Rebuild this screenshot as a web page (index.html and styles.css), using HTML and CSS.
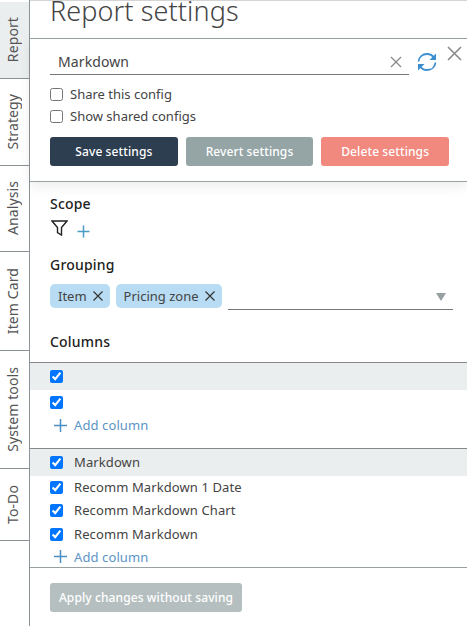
FILE: index.html
```html
<!DOCTYPE html>
<html>
<head>
    <title>Report settings</title>
    <link rel="stylesheet" href="styles.css">
</head>
<body>
    <div class="app">
        <nav class="tabs">
            <div class="tab tab-report active"><span>Report</span></div>
            <div class="tab tab-strategy"><span>Strategy</span></div>
            <div class="tab tab-analysis"><span>Analysis</span></div>
            <div class="tab tab-item"><span>Item Card</span></div>
            <div class="tab tab-system"><span>System tools</span></div>
            <div class="tab tab-todo"><span>To-Do</span></div>
        </nav>

        <main class="content">
            <h1 class="title">Report settings</h1>

            <section class="config">
                <svg class="close-icon" width="15" height="15" viewBox="0 0 15 15"><path d="M1 1L14 14M14 1L1 14"/></svg>
                <div class="config-row">
                    <div class="config-input">
                        <span>Markdown</span>
                        <svg class="clear-icon" width="12" height="12" viewBox="0 0 12 12"><path d="M1 1L11 11M11 1L1 11"/></svg>
                    </div>
                    <svg class="refresh-icon" width="22" height="20" viewBox="0 0 22 20">
                        <path d="M2.500 9.500C3 5 6.500 2 11 2c3 0 5.500 1.500 7 3.800"/>
                        <path d="M19.500 10.500C19 15 15.500 18 11 18c-3 0-5.500-1.500-7-3.800"/>
                        <path class="solid" d="M20 1.500V8h-6.500zM2 18.500V12h6.500z"/>
                    </svg>
                </div>
                <label class="check"><input type="checkbox">Share this config</label>
                <label class="check"><input type="checkbox">Show shared configs</label>
                <div class="config-buttons">
                    <button class="btn btn-save" type="button">Save settings</button>
                    <button class="btn btn-revert" type="button">Revert settings</button>
                    <button class="btn btn-delete" type="button">Delete settings</button>
                </div>
            </section>

            <section class="options">
                <h2>Scope</h2>
                <div class="scope-row">
                    <svg class="filter-icon" width="17" height="16" viewBox="0 0 17 16"><path d="M1 1H16L10.500 7.500V15L6.500 12.500V7.500Z"/></svg>
                    <svg class="plus-icon" width="13" height="13" viewBox="0 0 13 13"><path d="M6.500 0.500V12.500M0.500 6.500H12.500"/></svg>
                </div>

                <h2 class="grouping-title">Grouping</h2>
                <div class="grouping-row">
                    <span class="chip">Item <svg width="10" height="10" viewBox="0 0 10 10"><path d="M0.500 0.500L9.500 9.500M9.500 0.500L0.500 9.500"/></svg></span>
                    <span class="chip">Pricing zone <svg width="10" height="10" viewBox="0 0 10 10"><path d="M0.500 0.500L9.500 9.500M9.500 0.500L0.500 9.500"/></svg></span>
                    <div class="select"><i class="arrow"></i></div>
                </div>

                <h2 class="columns-title">Columns</h2>
            </section>

            <section class="column-group">
                <div class="group-head"><input type="checkbox" checked></div>
                <div class="column-row"><input type="checkbox" checked></div>
                <div class="add-column">
                    <svg width="15" height="15" viewBox="0 0 15 15"><path d="M7.500 1V14M1 7.500H14"/></svg>Add column
                </div>
            </section>

            <section class="column-group second">
                <div class="group-head"><input type="checkbox" checked>Markdown</div>
                <div class="column-row"><input type="checkbox" checked>Recomm Markdown 1 Date</div>
                <div class="column-row"><input type="checkbox" checked>Recomm Markdown Chart</div>
                <div class="column-row"><input type="checkbox" checked>Recomm Markdown</div>
                <div class="add-column">
                    <svg width="15" height="15" viewBox="0 0 15 15"><path d="M7.500 1V14M1 7.500H14"/></svg>Add column
                </div>
            </section>

            <footer class="footer">
                <button class="btn btn-apply" type="button">Apply changes without saving</button>
            </footer>
        </main>
    </div>
</body>
</html>
```

FILE: styles.css
```css
* {
    box-sizing: border-box;
}

html, body {
    margin: 0;
    height: 100%;
    overflow: hidden;
    background-color: #fff;
}

body {
    font-family: "Noto Sans", Arial, sans-serif;
    font-size: 13px;
    letter-spacing: 0.1px;
    color: #444;
}

.app {
    display: flex;
    height: 626px;
}

/* left tabs */
.tabs {
    width: 30px;
    flex: none;
    padding-top: 2px;
    border-right: 1px solid #8c9396;
}

.tab {
    display: flex;
    justify-content: center;
    align-items: center;
    padding-right: 3px;
    border-bottom: 1px solid #8c9396;
    font-size: 14px;
    color: #555;
}

.tab span {
    writing-mode: vertical-rl;
    transform: rotate(180deg);
    line-height: 20px;
}

.tab.active {
    background-color: #ebeeef;
}

.tab-report { height: 77px; }
.tab-strategy { height: 87px; }
.tab-analysis { height: 86px; }
.tab-item { height: 99px; }
.tab-system { height: 118px; }
.tab-todo { height: 72px; }

.content {
    flex: 1;
    min-width: 0;
}

.title {
    height: 39px;
    margin: 0;
    padding-left: 20px;
    border-top: 1px solid #d4d4d4;
    border-bottom: 1px solid #9aa1a3;
    font-size: 27px;
    font-weight: 300;
    line-height: 20px;
    color: #444;
    overflow: hidden;
}

/* config panel */
.config {
    position: relative;
    height: 143px;
    padding: 10px 18px 0 20px;
    border-bottom: 1px solid #9aa1a3;
    box-shadow: 0 4px 12px rgba(0, 0, 0, 0.08);
}

.close-icon {
    position: absolute;
    top: 7px;
    right: 5px;
    fill: none;
    stroke: #8a8a8a;
    stroke-width: 1.6;
}

.config-row {
    display: flex;
    align-items: center;
    gap: 7px;
    width: 392px;
}

.config-input {
    display: flex;
    align-items: center;
    justify-content: space-between;
    width: 359px;
    height: 26px;
    padding: 0 7px 0 8px;
    border-bottom: 1px solid #777;
    font-size: 14px;
}

.clear-icon {
    fill: none;
    stroke: #8a8a8a;
    stroke-width: 1.3;
}

.refresh-icon {
    fill: none;
    stroke: #3b8fd0;
    stroke-width: 1.8;
}

.refresh-icon .solid {
    fill: #3b8fd0;
    stroke: none;
}

.check {
    display: flex;
    align-items: center;
    gap: 7px;
    height: 22px;
    letter-spacing: 0;
}

.config-row + .check {
    margin-top: 8px;
}

.check input {
    width: 13px;
    height: 13px;
    margin: 0;
}

.config-buttons {
    display: flex;
    gap: 8px;
    margin-top: 10px;
}

.btn {
    height: 29px;
    padding: 0;
    border: 0;
    border-radius: 3px;
    color: #fff;
    font-family: inherit;
    font-size: 12px;
    font-weight: 500;
    letter-spacing: 0.1px;
}

.config-buttons .btn {
    width: 128px;
}

.btn-save { background-color: #2c3e50; }
.btn-revert { background-color: #95a5a6; }
.btn-delete { background-color: #f1897f; }

.btn-apply {
    width: 192px;
    background-color: #b5bfc0;
}

/* scope, grouping */
.options {
    padding: 0 14px 0 20px;
}

.options h2 {
    margin: 0;
    font-size: 14px;
    font-weight: 500;
    letter-spacing: 0.2px;
    line-height: 20px;
    color: #222;
}

.options h2:first-child {
    margin-top: 12px;
}

.scope-row {
    display: flex;
    align-items: flex-end;
    gap: 9px;
    height: 24px;
    padding-left: 1px;
}

.filter-icon {
    margin-bottom: 2px;
    fill: none;
    stroke: #222;
    stroke-width: 1.4;
}

.plus-icon {
    fill: none;
    stroke: #4a9cc4;
    stroke-width: 1.5;
}

.options .grouping-title {
    margin-top: 17px;
}

.grouping-row {
    display: flex;
    align-items: flex-start;
    gap: 6px;
    margin-top: 9px;
    height: 26px;
}

.chip {
    display: flex;
    align-items: center;
    gap: 6px;
    height: 24px;
    padding: 0 7px 0 8px;
    border-radius: 5px;
    background-color: #b7dcf3;
    letter-spacing: 0;
}

.chip svg {
    fill: none;
    stroke: #333;
    stroke-width: 1.2;
}

.select {
    position: relative;
    flex: 1;
    height: 26px;
    border-bottom: 1px solid #777;
}

.arrow {
    position: absolute;
    top: 9px;
    right: 7px;
    border-left: 5px solid transparent;
    border-right: 5px solid transparent;
    border-top: 8px solid #96a0a2;
}

.options .columns-title {
    margin-top: 22px;
}

/* column lists */
.column-group {
    margin-top: 10px;
}

.column-group.second {
    margin-top: 12px;
}

.group-head, .column-row {
    display: flex;
    align-items: center;
    gap: 11px;
    padding-left: 20px;
}

.group-head {
    height: 28px;
    border-top: 1px solid #888;
    background-color: #ebeeef;
}

.column-row {
    height: 24px;
}

.second .column-row {
    height: 23.5px;
}

.second .group-head, .second .column-row {
    padding-bottom: 2px;
}

.column-group input {
    width: 13px;
    height: 13px;
    margin: 0;
}

.second input {
    margin-top: 1px;
}

.add-column {
    display: flex;
    align-items: center;
    gap: 6px;
    height: 22px;
    padding-left: 23px;
    color: #5b94c6;
}

.second .add-column {
    height: 20.5px;
}

.add-column svg {
    fill: none;
    stroke: #4a8fc4;
    stroke-width: 1.5;
}

.footer {
    padding: 15px 20px 0;
    border-top: 1px solid #9aa1a3;
}
```
